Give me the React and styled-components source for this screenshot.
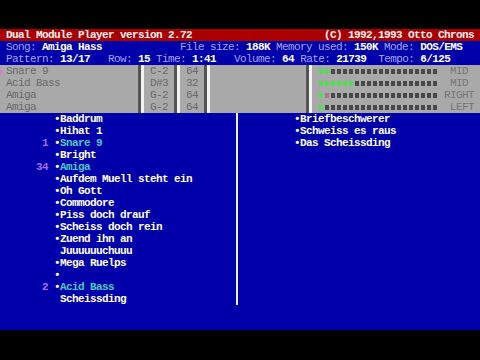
import styled, { createGlobalStyle } from "styled-components";

const GlobalStyle = createGlobalStyle`
  html, body {
    margin: 0;
    background: #000;
  }
  body {
    font-family: "Liberation Mono", "DejaVu Sans Mono", monospace;
    font-size: 11px;
    letter-spacing: -0.6px;
    line-height: 12px;
  }
`;

const Screen = styled.div`
  width: 480px;
  height: 360px;
  box-sizing: border-box;
  padding-top: 29px;
  background: #000;
  display: flex;
  flex-direction: column;
  overflow: hidden;
`;

const TitleBar = styled.div`
  height: 12px;
  padding: 0 6px;
  background: #aa0000;
  color: #fff2f2;
  font-weight: bold;
  display: flex;
  justify-content: space-between;
  white-space: pre;
`;

const InfoBar = styled.div`
  background: #0000aa;
  padding-left: 6px;
`;

const InfoLine = styled.div`
  height: 12px;
  white-space: pre;
  color: #a4a4f2;
`;

const Value = styled.span`
  color: #ffffff;
  font-weight: bold;
`;

const Panel = styled.div`
  height: 48px;
  display: grid;
  grid-template-columns: 138px 6px 30px 6px 24px 6px 96px 6px 168px;
  background: #a9a9a9;
  color: #6a6a6a;
`;

const Column = styled.div`
  padding-left: ${(p) => p.$pad}px;
`;

const Cell = styled.div`
  height: 12px;
  white-space: pre;
  display: flex;
  align-items: flex-start;
`;

const Marker = styled.span`
  width: 0;
  height: 0;
  margin: 4px 3px 0 0;
  border-left: 3px solid ${(p) => (p.$on ? "#e070e0" : "transparent")};
  border-top: 3px solid transparent;
  border-bottom: 3px solid transparent;
`;

const Separator = styled.div`
  background: linear-gradient(to right, #545454 0 3px, #f2f2f2 3px 6px);
`;

const Meter = styled.div`
  height: 12px;
  padding-left: 7px;
  display: flex;
  align-items: center;
`;

const Block = styled.span`
  width: 4px;
  height: 5px;
  margin-right: 2px;
  background: ${(p) => p.$color};
`;

const Side = styled.span`
  margin-left: 5px;
  white-space: pre;
  color: #767676;
`;

const Main = styled.div`
  height: 217px;
  background: #0000aa;
  display: grid;
  grid-template-columns: 234px 6px 240px;
  align-items: start;
`;

const List = styled.div`
  display: flex;
  flex-direction: column;
`;

const Entry = styled.div`
  height: 12px;
  display: flex;
  white-space: pre;
  font-weight: bold;
  color: #fffff2;
`;

const Num = styled.span`
  width: 48px;
  margin-right: 6px;
  text-align: right;
  color: #a66cf0;
`;

const Bullet = styled.span`
  width: 6px;
`;

const Name = styled.span`
  color: ${(p) => (p.$hl ? "#4ccac2" : "#fffff2")};
`;

const Divider = styled.div`
  height: 192px;
  display: flex;
  justify-content: center;

  &::before {
    content: "";
    width: 2px;
    background: #eeeeee;
  }
`;

const info = [
  [["Song: ", "Amiga Hass"], ["             File size: ", "188K"], [" Memory used: ", "150K"], [" Mode: ", "DOS/EMS"]],
  [["Pattern: ", "13/17"], ["   Row: ", "15"], [" Time: ", "1:41"], ["   Volume: ", "64"], [" Rate: ", "21739"], ["  Tempo: ", "6/125"]],
];

const channels = [
  { name: "Snare 9", note: "C-2", vol: "64", lit: 2, peak: -1, side: " MID " },
  { name: "Acid Bass", note: "D#3", vol: "32", lit: 6, peak: -1, side: " MID " },
  { name: "Amiga", note: "G-2", vol: "64", lit: 1, peak: 1, side: "RIGHT" },
  { name: "Amiga", note: "G-2", vol: "64", lit: 1, peak: -1, side: " LEFT" },
];

const left = [
  { text: "Baddrum" },
  { text: "Hihat 1" },
  { num: "1", text: "Snare 9", hl: true },
  { text: "Bright" },
  { num: "34", text: "Amiga", hl: true },
  { text: "Aufdem Muell steht ein" },
  { text: "Oh Gott" },
  { text: "Commodore" },
  { text: "Piss doch drauf" },
  { text: "Scheiss doch rein" },
  { text: "Zuend ihn an" },
  { text: "Juuuuuuchuuu", plain: true },
  { text: "Mega Ruelps" },
  { text: "" },
  { num: "2", text: "Acid Bass", hl: true },
  { text: "Scheissding", plain: true },
];

const right = [
  { text: "Briefbeschwerer" },
  { text: "Schweiss es raus" },
  { text: "Das Scheissding" },
];

const blockColor = (c, i) => {
  if (i < c.lit) return "#52e052";
  if (i === c.peak) return "#b06f94";
  return "#484848";
};

const Samples = ({ items }) => (
  <List>
    {items.map((s, i) => (
      <Entry key={i}>
        <Num>{s.num || ""}</Num>
        <Bullet>{s.plain ? "" : "•"}</Bullet>
        <Name $hl={s.hl}>{s.text}</Name>
      </Entry>
    ))}
  </List>
);

export default function App() {
  return (
    <>
      <GlobalStyle />
      <Screen>
        <TitleBar>
          <span>Dual Module Player version 2.72</span>
          <span>(C) 1992,1993 Otto Chrons</span>
        </TitleBar>
        <InfoBar>
          {info.map((line, i) => (
            <InfoLine key={i}>
              {line.map(([label, value], j) => (
                <span key={j}>
                  {label}
                  <Value>{value}</Value>
                </span>
              ))}
            </InfoLine>
          ))}
        </InfoBar>
        <Panel>
          <Column $pad={0}>
            {channels.map((c, i) => (
              <Cell key={i}>
                <Marker $on={i === 0} />
                {c.name}
              </Cell>
            ))}
          </Column>
          <Separator />
          <Column $pad={6}>
            {channels.map((c, i) => (
              <Cell key={i}>{c.note}</Cell>
            ))}
          </Column>
          <Separator />
          <Column $pad={6}>
            {channels.map((c, i) => (
              <Cell key={i}>{c.vol}</Cell>
            ))}
          </Column>
          <Separator />
          <Column $pad={0} />
          <Separator />
          <Column $pad={0}>
            {channels.map((c, i) => (
              <Meter key={i}>
                {Array.from({ length: 20 }, (_, k) => (
                  <Block key={k} $color={blockColor(c, k)} />
                ))}
                <Side>{c.side}</Side>
              </Meter>
            ))}
          </Column>
        </Panel>
        <Main>
          <Samples items={left} />
          <Divider />
          <Samples items={right} />
        </Main>
      </Screen>
    </>
  );
}
